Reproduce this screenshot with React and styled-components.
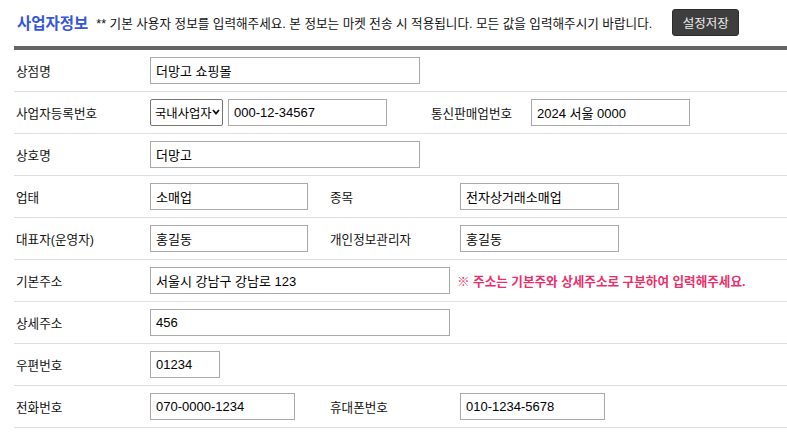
import React from "react";
import styled, { createGlobalStyle } from "styled-components";

const GlobalStyle = createGlobalStyle`
  html, body {
    margin: 0;
    padding: 0;
    background: #fff;
  }
  body {
    font-family: "Liberation Sans", "Noto Sans CJK KR", sans-serif;
    color: #111;
  }
`;

const Page = styled.div`
  padding-left: 14px;
  width: 773px;
`;

const Header = styled.div`
  display: flex;
  align-items: center;
  height: 46px;
  padding-left: 3px;
  border-bottom: 4px solid #666;
`;

const Title = styled.div`
  font-size: 15.5px;
  font-weight: bold;
  color: #3656d8;
  margin-top: -2px;
`;

const Desc = styled.div`
  font-size: 12.6px;
  color: #111;
  margin-left: 8px;
  margin-top: -2px;
  white-space: nowrap;
`;

const SaveButton = styled.button`
  margin-left: 20px;
  width: 67px;
  height: 27px;
  margin-top: -2px;
  background: #3e3e3e;
  border: 1px solid #2c2c2c;
  border-radius: 3px;
  color: #eee;
  font-family: "Noto Sans CJK KR", sans-serif;
  font-size: 12.5px;
  padding: 0;
  cursor: pointer;
`;

const Row = styled.div`
  display: flex;
  align-items: center;
  height: 41px;
  border-bottom: 1px solid #dedede;
`;

const Label = styled.div`
  width: 134px;
  padding-left: 2px;
  font-size: 12.6px;
  color: #111;
  flex-shrink: 0;
`;

const SubLabel = styled.div`
  margin-left: ${(p) => p.$gap}px;
  width: ${(p) => p.$w}px;
  font-size: 12.6px;
  color: #111;
  flex-shrink: 0;
`;

const Input = styled.input`
  box-sizing: border-box;
  width: ${(p) => p.$w}px;
  height: 27px;
  border: 1px solid #a9a9a9;
  padding: 0 5px;
  margin: 0;
  margin-left: ${(p) => p.$ml || 0}px;
  font-family: "Liberation Sans", "Noto Sans CJK KR", sans-serif;
  font-size: 13px;
  color: #000;
  background: #fff;
  outline: none;
`;

const SelectWrap = styled.div`
  position: relative;
  display: flex;
  width: 73px;
  height: 27px;
`;

const Select = styled.select`
  appearance: none;
  box-sizing: border-box;
  width: 73px;
  height: 27px;
  border: 1px solid #767676;
  border-radius: 2px;
  padding: 0 0 0 4px;
  margin: 0;
  font-family: "Noto Sans CJK KR", sans-serif;
  font-size: 12.3px;
  color: #000;
  background: #fff;
  outline: none;
`;

const Chevron = styled.svg`
  position: absolute;
  right: 3px;
  top: 10px;
  pointer-events: none;
`;

const Note = styled.div`
  margin-left: 7px;
  font-size: 12.6px;
  font-weight: bold;
  color: #ea2f6b;
  white-space: nowrap;
`;

export default function App() {
  return (
    <>
      <GlobalStyle />
      <Page>
        <Header>
          <Title>사업자정보</Title>
          <Desc>
            ** 기본 사용자 정보를 입력해주세요. 본 정보는 마켓 전송 시 적용됩니다. 모든 값을 입력해주시기 바랍니다.
          </Desc>
          <SaveButton>설정저장</SaveButton>
        </Header>

        <Row>
          <Label>상점명</Label>
          <Input $w={270} defaultValue="더망고 쇼핑몰" />
        </Row>

        <Row>
          <Label>사업자등록번호</Label>
          <SelectWrap>
            <Select defaultValue="domestic">
              <option value="domestic">국내사업자</option>
              <option value="foreign">해외사업자</option>
            </Select>
            <Chevron width="8" height="6" viewBox="0 0 8 6">
              <path d="M1 1 L4 4.5 L7 1" fill="none" stroke="#111" strokeWidth="1.8" />
            </Chevron>
          </SelectWrap>
          <Input $w={159} $ml={5} defaultValue="000-12-34567" />
          <SubLabel $gap={44} $w={100}>통신판매업번호</SubLabel>
          <Input $w={159} defaultValue="2024 서울 0000" />
        </Row>

        <Row>
          <Label>상호명</Label>
          <Input $w={270} defaultValue="더망고" />
        </Row>

        <Row>
          <Label>업태</Label>
          <Input $w={158} defaultValue="소매업" />
          <SubLabel $gap={22} $w={130}>종목</SubLabel>
          <Input $w={159} defaultValue="전자상거래소매업" />
        </Row>

        <Row>
          <Label>대표자(운영자)</Label>
          <Input $w={158} defaultValue="홍길동" />
          <SubLabel $gap={22} $w={130}>개인정보관리자</SubLabel>
          <Input $w={159} defaultValue="홍길동" />
        </Row>

        <Row>
          <Label>기본주소</Label>
          <Input $w={300} defaultValue="서울시 강남구 강남로 123" />
          <Note>※ 주소는 기본주와 상세주소로 구분하여 입력해주세요.</Note>
        </Row>

        <Row>
          <Label>상세주소</Label>
          <Input $w={300} defaultValue="456" />
        </Row>

        <Row>
          <Label>우편번호</Label>
          <Input $w={70} defaultValue="01234" />
        </Row>

        <Row>
          <Label>전화번호</Label>
          <Input $w={145} defaultValue="070-0000-1234" />
          <SubLabel $gap={35} $w={130}>휴대폰번호</SubLabel>
          <Input $w={145} defaultValue="010-1234-5678" />
        </Row>
      </Page>
    </>
  );
}
